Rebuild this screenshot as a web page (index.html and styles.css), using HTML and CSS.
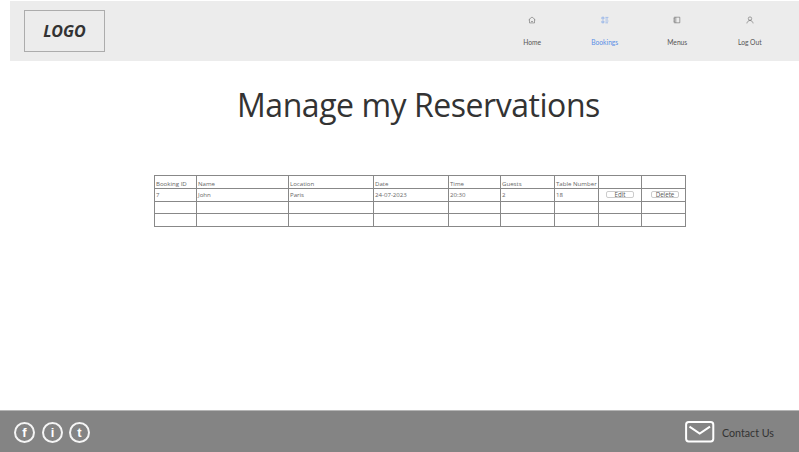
FILE: index.html
```html
<!DOCTYPE html>
<html lang="en">
<head>
<meta charset="utf-8">
<title>Manage my Reservations</title>
<link rel="stylesheet" href="styles.css">
</head>
<body>
<header class="topbar">
  <div class="logo">LOGO</div>
  <nav class="nav">
    <a class="nav-item"><svg class="nav-icon" viewBox="0 0 8 8"><path d="M.6 3.9 4 1l3.4 2.9M1.5 3.3v3.6h5V3.3M3 5.3q1 .8 2 0"/></svg><span>Home</span></a>
    <a class="nav-item active"><svg class="nav-icon" viewBox="0 0 8 8"><path d="M.9 1.2h2v1.8h-2zM.9 5h2v1.8h-2zM4.4 1.4h3M4.4 3h2.6M4.4 5h3M4.4 6.8h2.6"/></svg><span>Bookings</span></a>
    <a class="nav-item"><svg class="nav-icon" viewBox="0 0 8 8"><path d="M1.2 1.2h5.6v5.6H1.2zM2.8 1.2v5.6M.7 2.6h1M.7 4h1M.7 5.4h1"/></svg><span>Menus</span></a>
    <a class="nav-item"><svg class="nav-icon" viewBox="0 0 8 8"><circle cx="4" cy="2.6" r="1.7"/><path d="M.9 7.4C1.4 3.5 6.6 3.5 7.1 7.4"/></svg><span>Log Out</span></a>
  </nav>
</header>
<main class="content">
  <h1 class="title">Manage my Reservations</h1>
  <table class="bookings">
    <colgroup><col class="c-id"><col class="c-name"><col class="c-location"><col class="c-date"><col class="c-time"><col class="c-guests"><col class="c-table"><col class="c-edit"><col class="c-delete"></colgroup>
    <thead><tr><th>Booking ID</th><th>Name</th><th>Location</th><th>Date</th><th>Time</th><th>Guests</th><th>Table Number</th><th></th><th></th></tr></thead>
    <tbody>
      <tr><td>7</td><td>John</td><td>Paris</td><td>24-07-2023</td><td>20:30</td><td>2</td><td>18</td><td><button class="action edit">Edit</button></td><td><button class="action delete">Delete</button></td></tr>
      <tr><td></td><td></td><td></td><td></td><td></td><td></td><td></td><td></td><td></td></tr>
      <tr><td></td><td></td><td></td><td></td><td></td><td></td><td></td><td></td><td></td></tr>
    </tbody>
  </table>
</main>
<footer class="footer">
  <div class="social"><a class="badge">f</a><a class="badge">i</a><a class="badge">t</a></div>
  <a class="contact"><svg class="mail" viewBox="0 0 30 22"><rect x="1.1" y="1.1" width="27.2" height="19.3" rx="2.6"/><path d="M4.5 5.7 14.7 12.5 25 5.7"/></svg><span>Contact Us</span></a>
</footer>
</body>
</html>
```
FILE: styles.css
```css
* { box-sizing: border-box; }
body {
  margin: 0;
  height: 452px;
  display: flex;
  flex-direction: column;
  background: #fff;
  color: #333;
  font-family: "Open Sans", "Noto Sans", sans-serif;
  overflow: hidden;
}
.topbar {
  height: 60px;
  margin: 1px 0 0 10px;
  padding: 9px 13px 0 14px;
  display: flex;
  justify-content: space-between;
  background: #ececec;
}
.logo {
  width: 81px;
  height: 42px;
  border: 1px solid #acacac;
  display: flex;
  align-items: center;
  justify-content: center;
  font: italic 700 16px "Noto Sans", sans-serif;
}
.nav { display: flex; }
.nav-item {
  width: 72.5px;
  display: flex;
  flex-direction: column;
  align-items: center;
  padding-top: 6px;
  gap: 13px;
  color: #555;
  font: 6.7px/10px Lato, sans-serif;
}
.nav-item.active { color: #5b8fe6; }
.nav-icon {
  width: 8px;
  height: 8px;
  fill: none;
  stroke: currentColor;
  stroke-width: .5;
}
.content { flex: 1; }
.title {
  margin: 22px 0 0 237px;
  font-size: 32px;
  line-height: 43px;
  letter-spacing: -.46px;
  font-weight: 400;
  white-space: nowrap;
}
.bookings {
  margin: 49px 0 0 154px;
  width: 532px;
  table-layout: fixed;
  border-collapse: collapse;
  color: #666;
  font-size: 6.1px;
  line-height: 9px;
}
.c-id { width: 42px; }
.c-name { width: 92px; }
.c-location { width: 85px; }
.c-date { width: 75px; }
.c-time { width: 52px; }
.c-guests { width: 54px; }
.c-table { width: 44px; }
.c-edit { width: 43px; }
.c-delete { width: 44px; }
.bookings tr { height: 12.5px; }
.bookings thead tr { height: 13px; }
.bookings th, .bookings td {
  border: 1px solid #888;
  padding: 0 0 0 1px;
  font-weight: 400;
  text-align: left;
  white-space: nowrap;
}
.bookings th { padding-top: 2px; }
.action {
  display: block;
  width: 28px;
  height: 7px;
  margin: 0 0 0 6px;
  padding: 0;
  border: 1px solid #ccc;
  border-radius: 2px;
  background: #fff;
  color: #555;
  font: 6.2px/5px "Open Sans", sans-serif;
}
.delete { margin-left: 8px; }
.footer {
  height: 42px;
  padding: 2px 25px 0 14px;
  display: flex;
  align-items: center;
  justify-content: space-between;
  background: #848484;
  border-top: 1px solid #b5b5b5;
}
.social { display: flex; gap: 7px; }
.badge {
  width: 21px;
  height: 21px;
  border: 2px solid #f5f5f5;
  border-radius: 50%;
  display: flex;
  align-items: center;
  justify-content: center;
  color: #fff;
  font: 700 13px/17px "Liberation Sans", sans-serif;
}
.badge:last-child { margin-left: -1px; }
.contact {
  display: flex;
  align-items: center;
  gap: 7px;
  color: #333;
  font: 10.7px/14px Lato, sans-serif;
}
.mail {
  width: 30px;
  height: 22px;
  fill: none;
  stroke: #fff;
  stroke-width: 2;
  position: relative;
  top: -1px;
}
```
